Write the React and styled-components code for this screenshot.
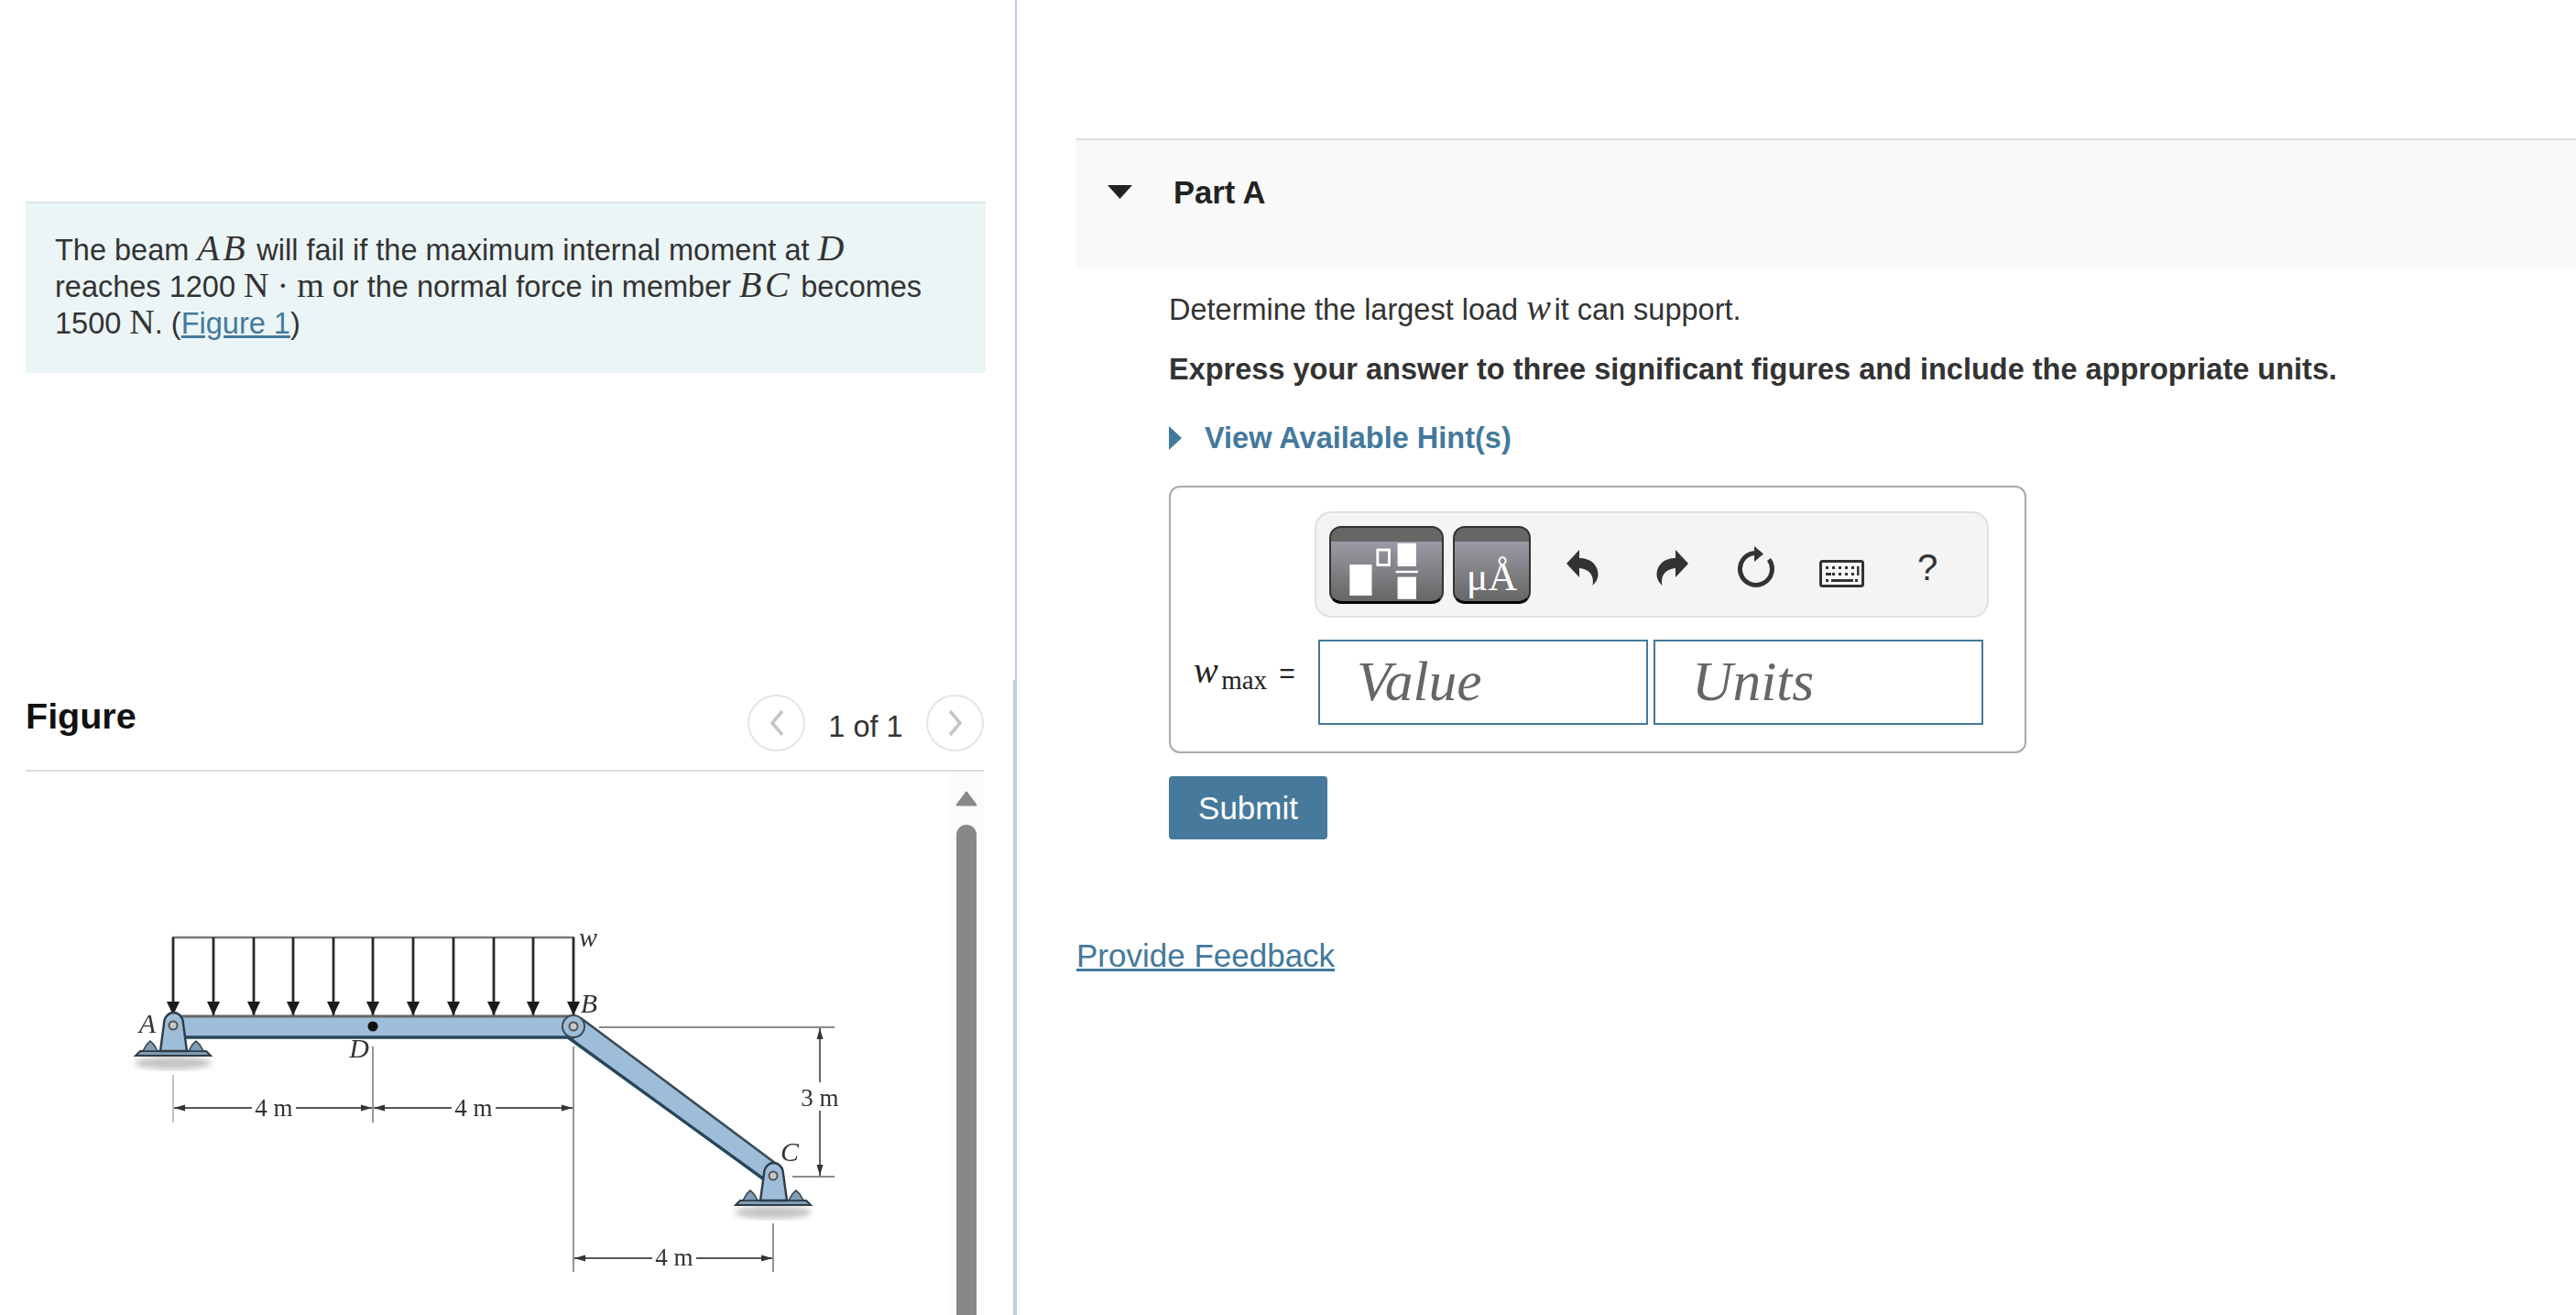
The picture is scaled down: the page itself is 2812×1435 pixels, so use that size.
import styled, { createGlobalStyle } from "styled-components";

const GlobalStyle = createGlobalStyle`
  html, body {
    margin: 0;
    padding: 0;
    height: 1435px;
    overflow: hidden;
    background: #fff;
  }
  body {
    font-family: "Liberation Sans", Arial, sans-serif;
    color: #333;
  }
`;

const ARROW_XS = [189, 233, 277, 320, 364, 407, 451, 495, 539, 582, 626];

const Support = ({ x, y, base }) => (
  <g>
    <ellipse cx={x} cy={base + 8} rx="42" ry="7" fill="#c4c4c4" filter="url(#soft)" />
    <path d={`M${x - 41} ${base}l5 -5h72l5 5z`} fill="#7f9db5" stroke="#2f3d48" strokeWidth="2" />
    <path d={`M${x - 33} ${base - 5}l4 -7 4 -4 4 4 4 7z`} fill="#7f9db5" stroke="#2f3d48" strokeWidth="1.5" />
    <path d={`M${x + 17} ${base - 5}l4 -7 4 -4 4 4 4 7z`} fill="#7f9db5" stroke="#2f3d48" strokeWidth="1.5" />
    <path
      d={`M${x - 14} ${base - 5}L${x - 10} ${y - 2}A10.500 12 0 0 1 ${x + 11} ${y - 2}L${x + 15} ${base - 5}z`}
      fill="#9dbdd9"
      stroke="#2f3d48"
      strokeWidth="2.4"
    />
    <circle cx={x} cy={y} r="4.500" fill="#c8c8c8" stroke="#555" strokeWidth="2" />
  </g>
);

const DimArrow = ({ x, y, dir }) => (
  <path d={`M${x} ${y}l${-12 * dir} -3.500v7z`} fill="#333" />
);

const BeamDiagram = () => (
  <Diagram viewBox="140 1000 780 400" width="780" height="400">
    <defs>
      <filter id="soft">
        <feGaussianBlur stdDeviation="3" />
      </filter>
    </defs>

    {/* distributed load */}
    <line x1="188" y1="1023" x2="627" y2="1023" stroke="#777" strokeWidth="2.4" />
    {ARROW_XS.map((x) => (
      <g key={x}>
        <line x1={x} y1="1023" x2={x} y2="1108" stroke="#2a2a2a" strokeWidth="2.8" />
        <path d={`M${x - 7} 1093h14l-7 15z`} fill="#1c1c1c" />
      </g>
    ))}

    {/* dimension lines */}
    <g stroke="#8a8a8a" strokeWidth="1.8" fill="none">
      <line x1="189" y1="1173" x2="189" y2="1225" stroke="#bbb" />
      <line x1="407" y1="1142" x2="407" y2="1225" />
      <line x1="626" y1="1142" x2="626" y2="1388" />
      <line x1="844" y1="1335" x2="844" y2="1388" />
      <line x1="654" y1="1121" x2="911" y2="1121" />
      <line x1="865" y1="1284" x2="911" y2="1284" />
      <line x1="895" y1="1122" x2="895" y2="1181" stroke="#555" />
      <line x1="895" y1="1212" x2="895" y2="1283" stroke="#555" />
      <line x1="190" y1="1209" x2="275" y2="1209" stroke="#555" />
      <line x1="323" y1="1209" x2="406" y2="1209" stroke="#555" />
      <line x1="408" y1="1209" x2="493" y2="1209" stroke="#555" />
      <line x1="541" y1="1209" x2="625" y2="1209" stroke="#555" />
      <line x1="627" y1="1373" x2="712" y2="1373" stroke="#555" />
      <line x1="760" y1="1373" x2="843" y2="1373" stroke="#555" />
    </g>
    <DimArrow x={190} y={1209} dir={-1} />
    <DimArrow x={406} y={1209} dir={1} />
    <DimArrow x={408} y={1209} dir={-1} />
    <DimArrow x={625} y={1209} dir={1} />
    <DimArrow x={627} y={1373} dir={-1} />
    <DimArrow x={843} y={1373} dir={1} />
    <path d="M895 1122l-3.500 12h7z" fill="#333" />
    <path d="M895 1283l-3.500 -12h7z" fill="#333" />

    {/* member BC */}
    <path d="M634 1111L854 1275L834 1287L620 1132z" fill="#9dbdd9" />
    <path d="M634 1111L854 1275" stroke="#3a4a55" strokeWidth="2.6" />
    <path d="M620 1132L834 1287" stroke="#27465c" strokeWidth="3.4" />

    {/* beam AB */}
    <rect x="197" y="1108" width="430" height="25" fill="#9dbdd9" />
    <line x1="197" y1="1109" x2="627" y2="1109" stroke="#666" strokeWidth="2.8" />
    <line x1="197" y1="1132" x2="627" y2="1132" stroke="#27465c" strokeWidth="3.4" />
    <circle cx="407" cy="1120" r="5.500" fill="#111" />
    <circle cx="626" cy="1120" r="12" fill="#9dbdd9" stroke="#3a4a55" strokeWidth="2" />
    <circle cx="626" cy="1120" r="4.500" fill="#c8c8c8" stroke="#555" strokeWidth="2" />

    <Support x={189} y={1119} base={1152} />
    <Support x={844} y={1283} base={1315} />

    <DiagramLabel x="161" y="1127" $italic>A</DiagramLabel>
    <DiagramLabel x="643" y="1105" $italic>B</DiagramLabel>
    <DiagramLabel x="862" y="1267" $italic>C</DiagramLabel>
    <DiagramLabel x="392" y="1154" $italic>D</DiagramLabel>
    <DiagramLabel x="642" y="1033" $italic>w</DiagramLabel>
    <DiagramLabel x="299" y="1218">4 m</DiagramLabel>
    <DiagramLabel x="517" y="1218">4 m</DiagramLabel>
    <DiagramLabel x="736" y="1381">4 m</DiagramLabel>
    <DiagramLabel x="895" y="1207">3 m</DiagramLabel>
  </Diagram>
);

const Chevron = ({ left }) => (
  <svg width="20" height="32" viewBox="0 0 20 32">
    <path
      d={left ? "M16 3L5 16l11 13" : "M4 3l11 13L4 29"}
      fill="none"
      stroke="#c6c6c6"
      strokeWidth="3.6"
    />
  </svg>
);

const StructureIcon = () => (
  <ButtonIcon viewBox="0 0 125 85" width="121" height="85">
    <rect x="21" y="42" width="25" height="35" fill="#fff" />
    <rect x="52.5" y="25.5" width="13" height="17" fill="none" stroke="#fff" strokeWidth="3" />
    <rect x="75" y="18" width="21" height="26" fill="#fff" />
    <rect x="73" y="49" width="25" height="2.5" fill="#fff" />
    <rect x="75" y="56" width="21" height="25" fill="#fff" />
  </ButtonIcon>
);

const UndoIcon = ({ flip }) => (
  <svg
    width="35"
    height="39"
    viewBox="0 0 35 39"
    style={flip ? { transform: "scaleX(-1)" } : undefined}
  >
    <path
      d="M0 15L14 0v9c13 0 20.500 8 20.500 18 0 5-3 9-6 12 2-9-2-18-14.500-19v10z"
      fill="#333"
    />
  </svg>
);

const ResetIcon = () => (
  <svg width="42" height="46" viewBox="0 0 42 46">
    <path
      d="M36 14.500A17.500 17.500 0 1 1 20 7.500"
      fill="none"
      stroke="#333"
      strokeWidth="5"
    />
    <path d="M20 0l10 8.500-10 8.500z" fill="#333" />
  </svg>
);

const KEY_ROWS = [
  { y: 7, xs: [7, 14, 21, 28, 35] },
  { y: 14, xs: [14, 21, 28, 35] },
  { y: 21, xs: [7, 39] },
];

const KeyboardIcon = () => (
  <svg width="49" height="30" viewBox="0 0 49 30">
    <rect x="1.500" y="1.500" width="46" height="27" rx="2" fill="#f8f8f8" stroke="#333" strokeWidth="3" />
    {KEY_ROWS.map((row) =>
      row.xs.map((x) => <rect key={`${row.y}-${x}`} x={x} y={row.y} width="3" height="3" fill="#333" />)
    )}
    <rect x="7" y="14" width="6" height="3" fill="#333" />
    <rect x="41" y="7" width="2.500" height="10" fill="#333" />
    <rect x="13" y="21" width="24" height="3" fill="#333" />
  </svg>
);

const App = () => {
  return (
    <Page>
      <GlobalStyle />
      <LeftPane>
        <InfoBox>
          The beam <MathVar>AB</MathVar> will fail if the maximum internal moment at{" "}
          <MathVar>D</MathVar> reaches 1200 <MathUnit>N</MathUnit> <MathUnit>·</MathUnit>{" "}
          <MathUnit>m</MathUnit> or the normal force in member <MathVar>BC</MathVar> becomes 1500{" "}
          <MathUnit>N</MathUnit>. (<InlineLink>Figure 1</InlineLink>)
        </InfoBox>
        <FigureSection>
          <FigureHeader>
            <FigureTitle>Figure</FigureTitle>
            <Pager>
              <PagerButton>
                <Chevron left />
              </PagerButton>
              <PagerText>1 of 1</PagerText>
              <PagerButton>
                <Chevron />
              </PagerButton>
            </Pager>
          </FigureHeader>
          <FigureBody>
            <FigureCanvas>
              <BeamDiagram />
            </FigureCanvas>
            <ScrollTrack>
              <svg width="24" height="17" viewBox="0 0 24 17">
                <path d="M12 1.500L22.500 15.500H1.500z" fill="#888" stroke="#888" strokeWidth="2" strokeLinejoin="round" />
              </svg>
              <ScrollThumb />
            </ScrollTrack>
          </FigureBody>
        </FigureSection>
      </LeftPane>

      <RightPane>
        <PartHeader>
          <svg width="27" height="15" viewBox="0 0 27 15">
            <path d="M0 0h27L13.500 15z" fill="#222" />
          </svg>
          <PartTitle>Part A</PartTitle>
        </PartHeader>
        <PartBody>
          <Prompt>
            Determine the largest load <MathVar>w</MathVar>it can support.
          </Prompt>
          <Instruction>
            Express your answer to three significant figures and include the appropriate units.
          </Instruction>
          <HintRow>
            <svg width="14" height="26" viewBox="0 0 14 26">
              <path d="M0 0l14 13L0 26z" fill="#43799c" />
            </svg>
            View Available Hint(s)
          </HintRow>
          <AnswerBox>
            <Toolbar>
              <TemplateButton $width={125}>
                <StructureIcon />
              </TemplateButton>
              <TemplateButton $width={85}>
                <GlyphText>μÅ</GlyphText>
              </TemplateButton>
              <ToolSlot $width={112} $drop={6}>
                <UndoIcon />
              </ToolSlot>
              <ToolSlot $width={84} $drop={6}>
                <UndoIcon flip />
              </ToolSlot>
              <ToolSlot $width={98} $drop={6}>
                <ResetIcon />
              </ToolSlot>
              <ToolSlot $width={90} $drop={20}>
                <KeyboardIcon />
              </ToolSlot>
              <ToolSlot $width={98} $drop={6}>
                <HelpMark>?</HelpMark>
              </ToolSlot>
            </Toolbar>
            <AnswerRow>
              <AnswerLabel>
                <MathVar>w</MathVar>
                <MathSub>max</MathSub>
                <Equals>=</Equals>
              </AnswerLabel>
              <AnswerField>Value</AnswerField>
              <AnswerField>Units</AnswerField>
            </AnswerRow>
          </AnswerBox>
          <SubmitButton>Submit</SubmitButton>
        </PartBody>
        <FeedbackLink>Provide Feedback</FeedbackLink>
      </RightPane>
    </Page>
  );
};

const Page = styled.div`
  display: flex;
  width: 2812px;
  height: 1435px;
  overflow: hidden;
  background: #fff;
  font-size: 32.5px;
  line-height: 40px;
`;

const LeftPane = styled.div`
  width: 1108px;
  flex: none;
  padding-top: 220px;
  box-sizing: border-box;
  display: flex;
  flex-direction: column;
`;

const InfoBox = styled.div`
  width: 1048px;
  height: 187px;
  margin-left: 28px;
  padding: 31px 32px 0;
  box-sizing: border-box;
  background: #ebf5f6;
  border-top: 2px solid #dce6e6;
`;

const MathVar = styled.span`
  font-family: "Liberation Serif", "Times New Roman", serif;
  font-style: italic;
  font-size: 40px;
  letter-spacing: 3.5px;
  line-height: 0;
`;

const MathUnit = styled.span`
  font-family: "Liberation Serif", "Times New Roman", serif;
  font-size: 38px;
  line-height: 0;
`;

const MathSub = styled.span`
  font-family: "Liberation Serif", "Times New Roman", serif;
  font-size: 29px;
  line-height: 0;
  position: relative;
  top: 7px;
`;

const InlineLink = styled.a`
  color: #43799c;
  text-decoration: underline;
`;

const FigureSection = styled.section`
  flex: 1;
  min-height: 0;
  margin-top: 335px;
  padding-left: 28px;
  padding-right: 32px;
  border-right: 2px solid #bfcfe2;
  display: flex;
  flex-direction: column;
`;

const FigureHeader = styled.div`
  height: 100px;
  flex: none;
  box-sizing: border-box;
  padding-top: 16px;
  border-bottom: 2px solid #ddd;
  display: flex;
  align-items: flex-start;
`;

const FigureTitle = styled.h2`
  margin: 0;
  font-size: 39.5px;
  line-height: 46px;
  font-weight: 700;
  color: #111;
`;

const Pager = styled.div`
  margin-left: auto;
  display: flex;
  align-items: flex-start;
`;

const PagerButton = styled.div`
  width: 63px;
  height: 62px;
  box-sizing: border-box;
  border: 2px solid #e5e5e5;
  border-radius: 50%;
  display: flex;
  align-items: center;
  justify-content: center;
`;

const PagerText = styled.div`
  width: 132px;
  text-align: center;
  line-height: 62px;
  margin-top: 4px;
`;

const FigureBody = styled.div`
  flex: 1;
  min-height: 0;
  display: flex;
`;

const FigureCanvas = styled.div`
  flex: 1;
  padding: 158px 0 0 112px;
  overflow: hidden;
`;

const Diagram = styled.svg`
  display: block;
  filter: blur(0.6px);
`;

const DiagramLabel = styled.text`
  font-family: "Liberation Serif", "Times New Roman", serif;
  font-size: ${(props) => (props.$italic ? "30px" : "27px")};
  font-style: ${(props) => (props.$italic ? "italic" : "normal")};
  fill: #333;
  text-anchor: middle;
`;

const ScrollTrack = styled.div`
  width: 38px;
  flex: none;
  padding-top: 21px;
  box-sizing: border-box;
  background: #fbfbfb;
  display: flex;
  flex-direction: column;
  align-items: center;
  gap: 20px;
`;

const ScrollThumb = styled.div`
  width: 22px;
  flex: 1;
  background: #888;
  border-radius: 11px 11px 0 0;
`;

const RightPane = styled.div`
  flex: 1;
  min-width: 0;
  padding-top: 151px;
  box-sizing: border-box;
  border-left: 2px solid #bfcfe2;
`;

const PartHeader = styled.div`
  height: 142px;
  margin-left: 65px;
  padding: 37px 0 0 34px;
  box-sizing: border-box;
  border-top: 2px solid #ddd;
  background: #f9f9f9;
  display: flex;
  align-items: flex-start;
  gap: 45px;

  svg {
    margin-top: 12px;
  }
`;

const PartTitle = styled.h3`
  margin: 0;
  font-size: 34.6px;
  line-height: 40px;
  font-weight: 700;
  color: #222;
`;

const PartBody = styled.div`
  margin-left: 166px;
`;

const Prompt = styled.p`
  margin: 25px 0 0;
`;

const Instruction = styled.p`
  margin: 25px 0 0;
  font-weight: 700;
`;

const HintRow = styled.div`
  margin-top: 35px;
  display: flex;
  align-items: center;
  gap: 25px;
  color: #43799c;
  font-weight: 700;
`;

const AnswerBox = styled.div`
  width: 936px;
  height: 292px;
  margin-top: 32px;
  padding: 26px 0 0 25px;
  box-sizing: border-box;
  border: 2px solid #aaa;
  border-radius: 12px;
`;

const Toolbar = styled.div`
  width: 736px;
  height: 116px;
  margin-left: 132px;
  padding-left: 14px;
  box-sizing: border-box;
  background: #f4f4f4;
  border: 2px solid #e0e0e0;
  border-radius: 18px;
  display: flex;
  align-items: center;
`;

const TemplateButton = styled.div`
  width: ${(props) => props.$width}px;
  height: 85px;
  flex: none;
  margin-right: 10px;
  box-sizing: border-box;
  border: 2px solid #333;
  border-bottom-width: 3px;
  border-bottom-color: #000;
  border-radius: 13px;
  overflow: hidden;
  background: linear-gradient(to bottom, #666 0, #666 15px, #9b9aa4 15px, #666 100%);
  display: flex;
  align-items: flex-end;
  justify-content: center;

  &:nth-child(2) {
    margin-right: 0;
  }
`;

const ButtonIcon = styled.svg`
  display: block;
  flex: none;
  margin-bottom: -3px;
`;

const GlyphText = styled.span`
  font-family: "Liberation Serif", "Times New Roman", serif;
  font-size: 44px;
  line-height: 52px;
  color: #fff;
`;

const ToolSlot = styled.div`
  width: ${(props) => props.$width}px;
  flex: none;
  padding-top: ${(props) => props.$drop}px;
  box-sizing: border-box;
  display: flex;
  align-items: center;
  justify-content: center;
`;

const HelpMark = styled.span`
  font-size: 40px;
  line-height: 46px;
  color: #333;
`;

const AnswerRow = styled.div`
  margin-top: 24px;
  display: flex;
  align-items: stretch;
  height: 93px;
`;

const AnswerLabel = styled.div`
  width: 136px;
  flex: none;
  padding-top: 16px;
  box-sizing: border-box;
  color: #222;
`;

const Equals = styled.span`
  margin-left: 13px;
  font-size: 30px;
`;

const AnswerField = styled.div`
  width: 360px;
  margin-right: 6px;
  padding-left: 40px;
  box-sizing: border-box;
  border: 2px solid #43799c;
  font-family: "Liberation Serif", "Times New Roman", serif;
  font-style: italic;
  font-size: 61.5px;
  line-height: 86px;
  color: #666;
`;

const SubmitButton = styled.button`
  display: block;
  width: 173px;
  height: 69px;
  margin-top: 25px;
  padding: 0;
  border: none;
  border-radius: 4px;
  background: #46799b;
  color: #fff;
  font-family: "Liberation Sans", Arial, sans-serif;
  font-size: 35px;
`;

const FeedbackLink = styled.a`
  display: block;
  margin: 107px 0 0 65px;
  color: #43799c;
  text-decoration: underline;
  font-size: 35px;
`;

export default App;
